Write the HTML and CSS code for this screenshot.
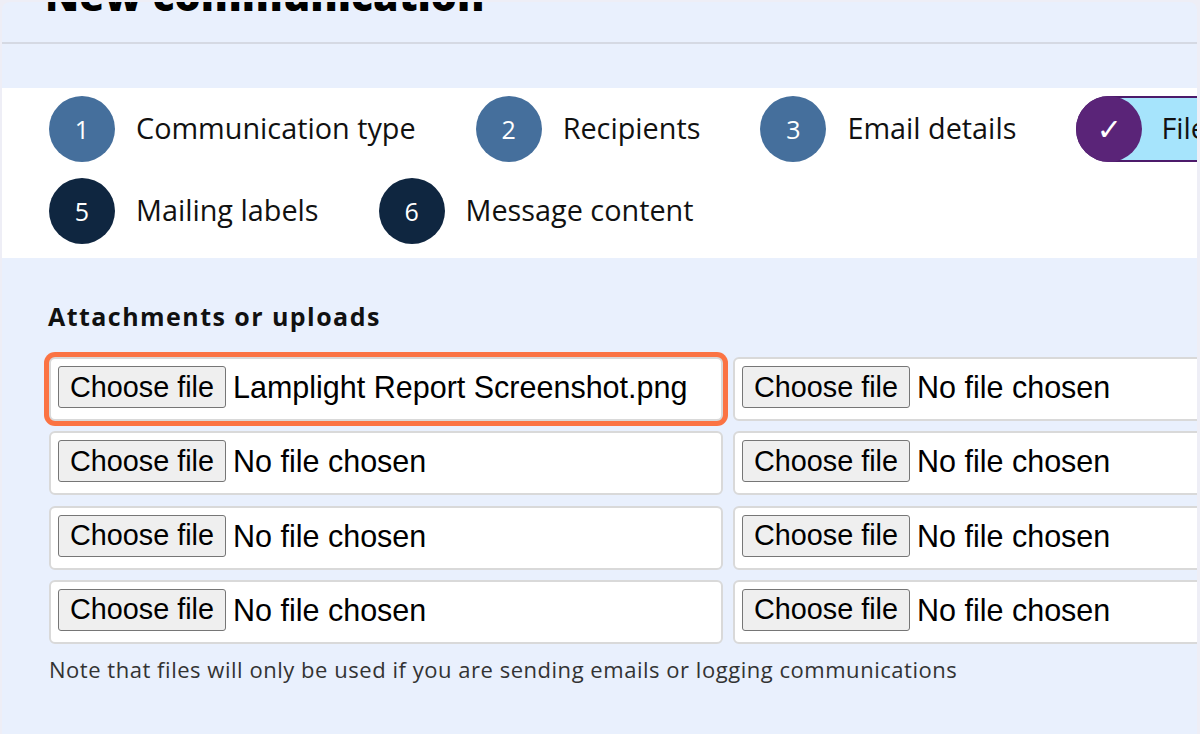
FILE: index.html
```html
<!DOCTYPE html>
<html lang="en">
<head>
<meta charset="utf-8">
<title>New communication</title>
<link rel="stylesheet" href="styles.css">
</head>
<body>
<div class="window">
  <div class="inner">
    <header class="page-head">
      <h1 class="title">New communication</h1>
    </header>
    <div class="spacer"></div>
    <section class="steps">
      <div class="step-row">
        <div class="step done"><span class="num">1</span><span class="label">Communication type</span></div>
        <div class="step done"><span class="num">2</span><span class="label">Recipients</span></div>
        <div class="step done"><span class="num">3</span><span class="label">Email details</span></div>
        <div class="step current"><span class="num check">&#10003;</span><span class="label">Files</span></div>
      </div>
      <div class="step-row">
        <div class="step todo"><span class="num">5</span><span class="label">Mailing labels</span></div>
        <div class="step todo"><span class="num">6</span><span class="label">Message content</span></div>
      </div>
    </section>
    <section class="uploads">
      <h2 class="section-title">Attachments or uploads</h2>
      <div class="file-grid">
        <div class="file focus"><span class="btn">Choose file</span><span class="fname">Lamplight Report Screenshot.png</span></div>
        <div class="file"><span class="btn">Choose file</span><span class="fname">No file chosen</span></div>
        <div class="file"><span class="btn">Choose file</span><span class="fname">No file chosen</span></div>
        <div class="file"><span class="btn">Choose file</span><span class="fname">No file chosen</span></div>
        <div class="file"><span class="btn">Choose file</span><span class="fname">No file chosen</span></div>
        <div class="file"><span class="btn">Choose file</span><span class="fname">No file chosen</span></div>
        <div class="file"><span class="btn">Choose file</span><span class="fname">No file chosen</span></div>
        <div class="file"><span class="btn">Choose file</span><span class="fname">No file chosen</span></div>
      </div>
      <p class="note">Note that files will only be used if you are sending emails or logging communications</p>
    </section>
  </div>
</div>
</body>
</html>
```

FILE: styles.css
```css
html, body {
  margin: 0;
  padding: 0;
}
body {
  background: #eeeef6;
  height: 734px;
  overflow: hidden;
  font-family: "Open Sans", "Liberation Sans", sans-serif;
  color: #111;
}
.window {
  margin: 2px 0 0 2px;
  width: 1195px;
  height: 732px;
  background: #e9f0fd;
  border-radius: 8px 8px 0 0;
  overflow: hidden;
}
.inner {
  width: 1460px;
}
.page-head {
  display: flex;
  align-items: flex-start;
  height: 40px;
  border-bottom: 2px solid #d5d9e3;
  padding-left: 43px;
}
.title {
  margin: -27px 0 0;
  font: 800 41px/40px "Open Sans", sans-serif;
  color: #000;
  white-space: nowrap;
}
.spacer {
  height: 44px;
}
.steps {
  background: #fff;
  padding: 8px 0 14px 47px;
  display: flex;
  flex-direction: column;
  gap: 16px;
}
.step-row {
  display: flex;
}
.step {
  display: flex;
  align-items: center;
  gap: 21px;
  margin-right: 60px;
  flex-shrink: 0;
}
.num {
  width: 66px;
  height: 66px;
  border-radius: 50%;
  display: flex;
  align-items: center;
  justify-content: center;
  color: #fff;
  font: 25px "Open Sans", sans-serif;
  flex-shrink: 0;
}
.label {
  font: 28.8px/36px "Open Sans", sans-serif;
  color: #111;
  white-space: nowrap;
  margin-top: -3px;
}
.done .num {
  background: #456f9c;
}
.todo .num {
  background: #0f2640;
}
.current {
  background: #a6e4fc;
  border: 2px solid #4c1a6a;
  border-radius: 33px;
  height: 62px;
  padding-right: 200px;
  gap: 19px;
}
.current .num {
  background: #5a2478;
  margin: -2px 0 -2px -2px;
  font: bold 30px "DejaVu Sans", sans-serif;
}
.uploads {
  padding: 42px 0 0 47px;
}
.section-title {
  margin: 0 0 0 -1px;
  font: bold 25px/32px "Open Sans", sans-serif;
  letter-spacing: 1.45px;
  color: #111;
}
.file-grid {
  margin-top: 25px;
  display: grid;
  grid-template-columns: 674px 674px;
  column-gap: 10px;
  row-gap: 10.3px;
}
.file {
  box-sizing: border-box;
  height: 64px;
  border: 2px solid #d9d9d9;
  border-radius: 6px;
  background: #fff;
  display: flex;
  align-items: flex-start;
  padding: 7px;
}
.file.focus {
  box-shadow: 0 0 0 5px #fb7343;
}
.btn {
  box-sizing: border-box;
  width: 168px;
  height: 42px;
  border: 1px solid #767676;
  border-radius: 3px;
  background: #efefef;
  display: flex;
  align-items: center;
  justify-content: center;
  font: 28.8px "Liberation Sans", sans-serif;
  color: #000;
  white-space: nowrap;
}
.fname {
  margin-left: 7px;
  font: 30.5px/42px "Liberation Sans", sans-serif;
  color: #000;
  white-space: nowrap;
}
.note {
  margin: 12px 0 0 0;
  font: 22px/26px "Open Sans", sans-serif;
  letter-spacing: 0.53px;
  color: #333;
  white-space: nowrap;
}
```
